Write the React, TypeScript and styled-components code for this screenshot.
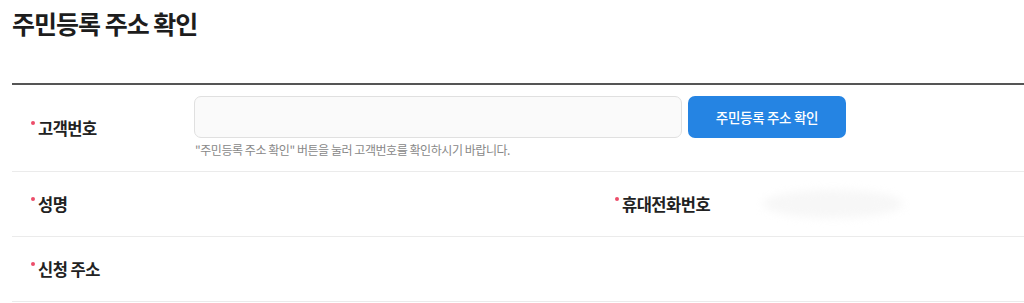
import React from "react";
import styled, { createGlobalStyle } from "styled-components";

const Global = createGlobalStyle`
  html, body { margin: 0; padding: 0; background: #fff; }
  body { font-family: "Noto Sans CJK KR", "Noto Sans", sans-serif; color: #222; }
  * { box-sizing: border-box; }
`;

const Page = styled.div`
  padding: 0 0 0 12px;
`;

const Title = styled.h1`
  margin: 0;
  padding-top: 4px;
  height: 83px;
  font-size: 25px;
  font-weight: 700;
  letter-spacing: -1px;
  line-height: 38px;
  color: #1d1d1d;
`;

const Table = styled.div`
  border-top: 2px solid #555;
`;

const Row = styled.div<{ $h: number }>`
  display: grid;
  grid-template-columns: 182px 402px 165px 1fr;
  min-height: ${(p) => p.$h}px;
  border-bottom: 1px solid #ebebeb;
  align-items: center;
`;

const Label = styled.div`
  display: flex;
  align-items: flex-start;
  padding-left: 19px;
  font-size: 16.5px;
  font-weight: 700;
  letter-spacing: -0.5px;
  color: #222;
`;

const Dot = styled.span`
  width: 4px;
  height: 4px;
  border-radius: 50%;
  background: #ec4d6a;
  margin-top: 5px;
  margin-right: 3px;
  flex: none;
`;

const Field = styled.div`
  grid-column: 2 / 5;
  display: flex;
  flex-direction: column;
  padding: 10px 0 12px;
`;

const InputLine = styled.div`
  display: flex;
  gap: 6px;
`;

const Input = styled.input`
  width: 488px;
  height: 42px;
  border: 1px solid #e0e0e0;
  border-radius: 7px;
  background: #fafafa;
  outline: none;
`;

const Button = styled.button`
  width: 158px;
  height: 42px;
  border: none;
  border-radius: 7px;
  background: #2584e3;
  color: #fff;
  font-family: inherit;
  font-size: 13.5px;
  font-weight: 500;
  letter-spacing: -0.3px;
`;

const Help = styled.p`
  margin: 3px 0 0 1px;
  font-size: 12px;
  color: #888;
  letter-spacing: -0.45px;
  line-height: 18px;
`;

const Masked = styled.div`
  width: 140px;
  height: 28px;
  border-radius: 50%;
  background: #f7f7f7;
  filter: blur(4px);
  margin-left: 2px;
`;

function Lbl({ children }: { children: React.ReactNode }) {
  return (
    <Label>
      <Dot />
      {children}
    </Label>
  );
}

export default function App() {
  return (
    <Page>
      <Global />
      <Title>주민등록 주소 확인</Title>
      <Table>
        <Row $h={87}>
          <Lbl>고객번호</Lbl>
          <Field>
            <InputLine>
              <Input />
              <Button>주민등록 주소 확인</Button>
            </InputLine>
            <Help>"주민등록 주소 확인" 버튼을 눌러 고객번호를 확인하시기 바랍니다.</Help>
          </Field>
        </Row>
        <Row $h={65}>
          <Lbl>성명</Lbl>
          <div />
          <Lbl>휴대전화번호</Lbl>
          <Masked />
        </Row>
        <Row $h={65}>
          <Lbl>신청 주소</Lbl>
        </Row>
      </Table>
    </Page>
  );
}
